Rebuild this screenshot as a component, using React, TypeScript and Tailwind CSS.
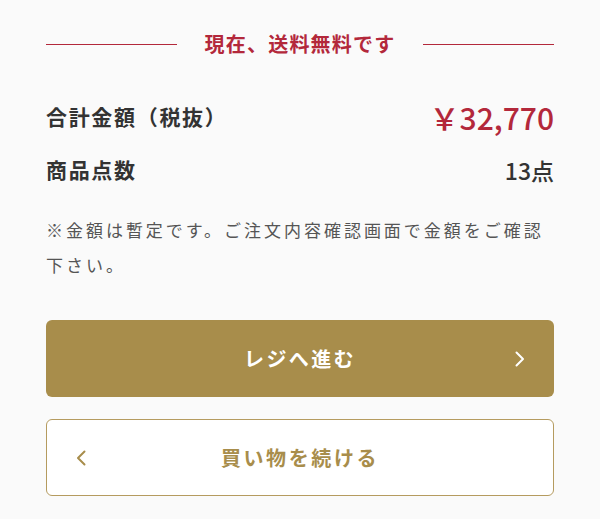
const jp = { fontFamily: '"Noto Sans CJK JP", "Noto Sans", sans-serif' };

function Chevron({ dir }: { dir: "left" | "right" }) {
  return (
    <svg width="12" height="16" viewBox="0 0 12 16" fill="none" stroke="currentColor" strokeWidth="2" strokeLinecap="round" strokeLinejoin="round">
      {dir === "right" ? <polyline points="2.5,1.5 9,8 2.5,14.5" /> : <polyline points="9.5,1.5 3,8 9.5,14.5" />}
    </svg>
  );
}

export default function App() {
  return (
    <div className="min-h-[519px] w-[600px] bg-[#fafafa] px-[46px] pt-[30px] text-[#333333]" style={jp}>
      {/* free shipping banner */}
      <div className="flex items-center gap-[28px]">
        <span className="h-px flex-1 bg-[#b3283b]" />
        <span className="text-[20px] leading-[28px] font-bold tracking-[0.06em] text-[#b3283b]">現在、送料無料です</span>
        <span className="h-px flex-1 bg-[#b3283b]" />
      </div>

      <div className="mt-[39px] flex h-[40px] items-center justify-between">
        <span className="text-[21px] font-bold tracking-[0.08em]">合計金額（税抜）</span>
        <span className="text-[30px] leading-none font-medium text-[#b3283b]">￥32,770</span>
      </div>

      <div className="mt-[18px] flex h-[30px] items-center justify-between">
        <span className="text-[21px] font-bold tracking-[0.08em]">商品点数</span>
        <span className="text-[23px] font-medium">13点</span>
      </div>

      <p className="mt-[27px] text-[17px] leading-[35px] tracking-[0.175em] text-[#555555]">
        ※金額は暫定です。ご注文内容確認画面で金額をご確認下さい。
      </p>

      <button className="relative mt-[38px] flex h-[77px] w-full items-center justify-center rounded-[6px] bg-[#a88d4b] text-white">
        <span className="text-[20px] font-bold tracking-[0.12em]">レジへ進む</span>
        <span className="absolute right-[28px] top-1/2 -translate-y-1/2">
          <Chevron dir="right" />
        </span>
      </button>

      <button className="relative mt-[22px] flex h-[77px] w-full items-center justify-center rounded-[6px] border border-[#b59b5f] bg-white text-[#a88d4b]">
        <span className="text-[20px] font-bold tracking-[0.13em]">買い物を続ける</span>
        <span className="absolute left-[28px] top-1/2 -translate-y-1/2">
          <Chevron dir="left" />
        </span>
      </button>
    </div>
  );
}
